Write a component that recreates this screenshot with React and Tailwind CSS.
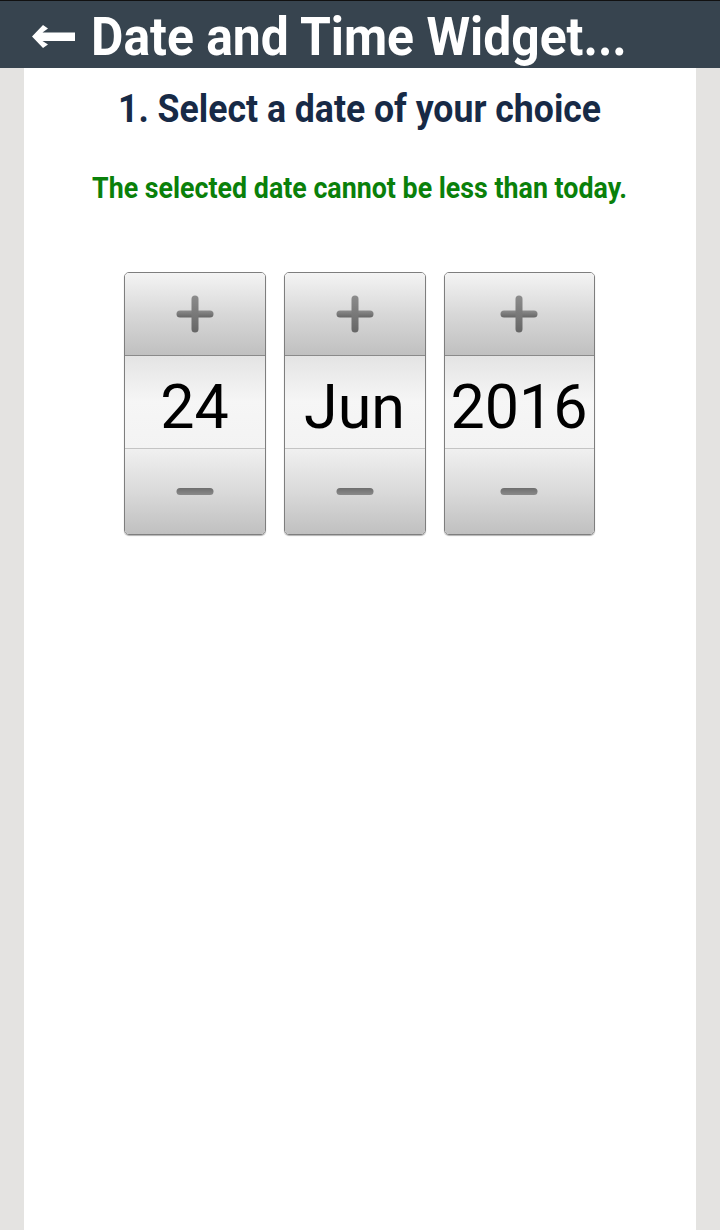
import React from "react";

function Plus() {
  return (
    <svg width="38" height="38" viewBox="0 0 38 38">
      <defs>
        <linearGradient id="pg" x1="0" y1="0" x2="0" y2="1">
          <stop offset="0" stopColor="#8c8c8c" />
          <stop offset="1" stopColor="#666666" />
        </linearGradient>
      </defs>
      <rect x="0.5" y="15.5" width="37" height="7" rx="3.5" fill="url(#pg)" />
      <rect x="15.5" y="0.5" width="7" height="37" rx="3.5" fill="url(#pg)" />
    </svg>
  );
}

function Minus() {
  return (
    <svg width="38" height="9" viewBox="0 0 38 9">
      <defs>
        <linearGradient id="mg" x1="0" y1="0" x2="0" y2="1">
          <stop offset="0" stopColor="#6e6e6e" />
          <stop offset="1" stopColor="#8a8a8a" />
        </linearGradient>
      </defs>
      <rect x="0.5" y="1" width="37" height="7" rx="3.5" fill="url(#mg)" />
    </svg>
  );
}

function Picker({ value, w }) {
  return (
    <div
      className={`flex flex-col rounded-[5px] border border-[#7e7e7e] overflow-hidden shadow-[0_1px_1px_rgba(0,0,0,0.3)] ${w}`}
    >
      <div className="h-[83px] flex items-center justify-center bg-gradient-to-b from-[#f4f4f4] via-[#d8d8d8] to-[#c0c0c0] border-b border-[#8a8a8a]">
        <Plus />
      </div>
      <div className="h-[93px] flex items-center justify-center bg-gradient-to-b from-[#e4e4e4] via-[#f6f6f6] to-[#f3f3f3] border-b border-[#c4c4c4] text-[61px] leading-none text-black font-['Roboto',sans-serif] pt-[10px]">
        {value}
      </div>
      <div className="h-[85px] flex items-center justify-center bg-gradient-to-b from-[#f0f0f0] via-[#dadada] to-[#c0c0c0]">
        <Minus />
      </div>
    </div>
  );
}

export default function App() {
  return (
    <div className="w-[720px] h-[1230px] flex flex-col bg-[#e4e3e1] font-['Roboto',sans-serif] overflow-hidden">
      <div className="h-[68px] shrink-0 bg-[#37444f] border-t border-[#111] flex items-center pl-[32px] gap-[16px]">
        <svg width="43" height="23" viewBox="0 0 43 23" className="mt-[4px]">
          <path d="M0 11.5 L11 0 L16 3.5 L10.5 7.5 L43 7.5 L43 16 L10.5 16 L16 19.5 L11 23 Z" fill="#fff" />
        </svg>
        <span className="text-white font-bold text-[53px] leading-none scale-x-[0.94] origin-left whitespace-nowrap mt-[6px]">
          Date and Time Widget...
        </span>
      </div>
      <div className="mx-[24px] flex-1 bg-white flex flex-col items-center">
        <div className="mt-[19px] text-[#172a46] font-bold text-[39px] leading-[44px] scale-x-[0.913] whitespace-nowrap">
          1. Select a date of your choice
        </div>
        <div className="mt-[39px] text-[#0a800a] font-bold text-[30px] leading-[36px] scale-x-[0.893] whitespace-nowrap">
          The selected date cannot be less than today.
        </div>
        <div className="mt-[66px] mr-[2px] flex gap-[18px]">
          <Picker value="24" w="w-[142px]" />
          <Picker value="Jun" w="w-[142px]" />
          <Picker value="2016" w="w-[151px]" />
        </div>
      </div>
    </div>
  );
}
